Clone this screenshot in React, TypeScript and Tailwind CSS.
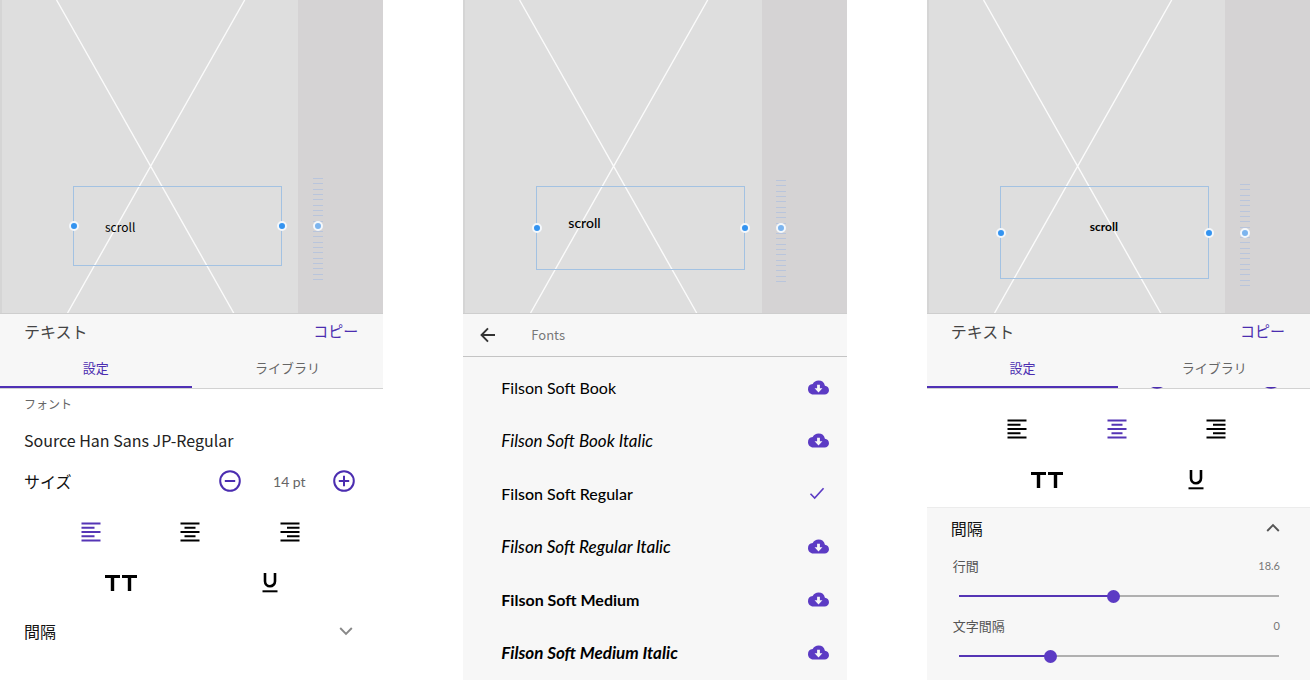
import { useState } from "react";

const JP = "font-['Noto_Sans_CJK_JP',sans-serif]";

type Align = "left" | "center" | "right";

const fonts = [
  { name: "Filson Soft Book", style: "text-[16px] font-normal" },
  { name: "Filson Soft Book Italic", style: "text-[17px] font-normal italic" },
  { name: "Filson Soft Regular", style: "text-[16px] font-medium", installed: true },
  { name: "Filson Soft Regular Italic", style: "text-[17px] font-medium italic" },
  { name: "Filson Soft Medium", style: "text-[16px] font-bold" },
  { name: "Filson Soft Medium Italic", style: "text-[17px] font-bold italic" },
];

/* Icons */

const alignLines: Record<Align, string> = {
  left: "M0 1h19M0 5.25h13M0 9.5h19M0 13.75h13M0 18h19",
  center: "M0 1h19M4 5.25h11M0 9.5h19M4 13.75h11M0 18h19",
  right: "M0 1h19M6.5 5.25h12.5M0 9.5h19M6.5 13.75h12.5M0 18h19",
};

function AlignIcon({ align }: { align: Align }) {
  return (
    <svg width="20" height="20" viewBox="-0.5 -0.5 20 20" stroke="currentColor" strokeWidth="1.9" fill="none">
      <path d={alignLines[align]} />
    </svg>
  );
}

function CircleIcon({ plus }: { plus?: boolean }) {
  return (
    <svg width="24" height="24" viewBox="0 0 24 24" stroke="currentColor" strokeWidth="2" fill="none">
      <circle cx="12" cy="12" r="9.8" />
      <path d={plus ? "M6.8 12h10.4M12 6.8v10.4" : "M6.8 12h10.4"} />
    </svg>
  );
}

function CapsIcon() {
  return (
    <svg width="34" height="20" viewBox="0 0 34 20" stroke="currentColor" fill="none">
      <path d="M1 3.5h15M18 3.5h15" strokeWidth="3" />
      <path d="M8.5 3v15M25.5 3v15" strokeWidth="3.4" />
    </svg>
  );
}

function UnderlineIcon() {
  return (
    <svg width="16" height="22" viewBox="0 0 16 22" stroke="currentColor" fill="none">
      <path d="M3 1v8.2a5 5 0 0 0 10 0V1" strokeWidth="2.6" />
      <path d="M0.5 19.3h15" strokeWidth="2" />
    </svg>
  );
}

function Chevron({ up }: { up?: boolean }) {
  return (
    <svg width="14" height="10" viewBox="0 0 14 10" stroke="currentColor" strokeWidth="1.9" fill="none">
      <path d={up ? "M1.2 8 7 2.2 12.8 8" : "M1.2 2 7 7.8 12.8 2"} />
    </svg>
  );
}

function CloudIcon() {
  return (
    <svg width="21" height="21" viewBox="0 0 24 24">
      <path
        fill="currentColor"
        d="M19.35 10.04A7.49 7.49 0 0 0 12 4C9.11 4 6.6 5.64 5.35 8.04A5.994 5.994 0 0 0 0 14c0 3.31 2.69 6 6 6h13c2.76 0 5-2.24 5-5 0-2.64-2.05-4.78-4.65-4.96Z"
      />
      <path fill="#f7f7f7" d="M10.4 8.8h3.2v4h2.9L12 17.6l-4.5-4.8h2.9Z" />
    </svg>
  );
}

function CheckIcon() {
  return (
    <svg width="21" height="21" viewBox="0 0 22 22" stroke="currentColor" strokeWidth="1.7" fill="none">
      <path d="M2.6 11.200 7 15.800 16.300 5.500" />
    </svg>
  );
}

function BackIcon() {
  return (
    <svg width="16" height="16" viewBox="0 0 16 16" stroke="currentColor" strokeWidth="1.9" fill="none">
      <path d="M15 8H2M8 1.300 1.500 8 8 14.700" />
    </svg>
  );
}

/* Artboard with the selected text box */

type CanvasProps = {
  boxHeight: string;
  handleY: string;
  text: string;
  ruler: string;
};

function Canvas({ boxHeight, handleY, text, ruler }: CanvasProps) {
  return (
    <div className="relative flex h-[314px] shrink-0 overflow-hidden border-b border-[#cecece] bg-[#dedede]">
      <div className="w-[2px] bg-[#d5d5d5]" />
      <div className="flex-1" />
      <div className="w-[85px] bg-[#d5d3d4]" />

      <svg className="absolute inset-0 h-full w-full" viewBox="0 0 383 314" preserveAspectRatio="none" fill="none">
        <path d="M56.5 0 233.5 314M244.500 0 67.500 314" stroke="#fbfbfb" strokeWidth="1.4" />
      </svg>

      <div className={`absolute top-[186px] left-[73px] w-[209px] border border-[#a3c2e2] ${boxHeight}`} />
      <span className={`absolute leading-5 text-black ${text}`}>scroll</span>

      <div className={`absolute left-[313px] flex h-[102px] w-[10px] flex-col justify-between ${ruler}`}>
        {Array.from({ length: 20 }, (_, i) => (
          <div key={i} className="h-px bg-[#b9c5dc]" />
        ))}
      </div>

      <Handle className={`left-[69px] bg-[#3393f0] ${handleY}`} />
      <Handle className={`left-[277px] bg-[#3393f0] ${handleY}`} />
      <Handle className={`left-[313px] bg-[#7cb4ee] ${handleY}`} />
    </div>
  );
}

function Handle({ className }: { className: string }) {
  return <div className={`absolute size-[10px] rounded-full border-2 border-[#f4f8fc] ${className}`} />;
}

/* Text settings */

type SliderProps = { id: string; label: string; value: number; min: number; max: number; step: number };

function Slider({ id, label, value, min, max, step }: SliderProps) {
  const [current, setCurrent] = useState(value);
  const pct = ((current - min) / (max - min)) * 100;

  return (
    <div>
      <div className="flex h-7 items-center justify-between pr-[30px] pl-[26px]">
        <label htmlFor={id} className="text-[13px] text-[#555]">
          {label}
        </label>
        <output htmlFor={id} className="font-['Lato',sans-serif] text-[11px] text-[#777]">
          {current}
        </output>
      </div>
      <div className="flex h-8 items-center pr-[31px] pl-8">
        <input
          id={id}
          type="range"
          min={min}
          max={max}
          step={step}
          value={current}
          onChange={(e) => setCurrent(Number(e.target.value))}
          style={{ backgroundImage: `linear-gradient(to right, #5535b5 ${pct}%, #b0b0b0 ${pct}%)` }}
          className="h-[2px] w-full appearance-none [&::-webkit-slider-thumb]:size-[13px] [&::-webkit-slider-thumb]:appearance-none [&::-webkit-slider-thumb]:rounded-full [&::-webkit-slider-thumb]:bg-[#5c3bc4]"
        />
      </div>
    </div>
  );
}

function TextPanel({ id, initialAlign, scrolled }: { id: string; initialAlign: Align; scrolled?: boolean }) {
  const [align, setAlign] = useState<Align>(initialAlign);
  const [size, setSize] = useState(14);
  const [open, setOpen] = useState(!!scrolled);

  return (
    <div className={`flex min-h-0 flex-1 flex-col ${JP}`}>
      <div className="bg-[#f7f7f7]">
        <div className="flex h-9 items-center justify-between pr-[25px] pb-0.5 pl-6">
          <h2 className="text-[16px] text-[#444]">テキスト</h2>
          <button className="text-[15px] text-[#4b2db0]">コピー</button>
        </div>
        <div role="tablist" className="flex h-[39px] border-b border-[#d2d2d2] text-[13px]">
          <button role="tab" aria-selected="true" className="flex-1 border-b-2 border-[#4f31b5] text-[#4b2db0]">
            設定
          </button>
          <button role="tab" aria-selected="false" className="flex-1 border-b-2 border-transparent text-[#666]">
            ライブラリ
          </button>
        </div>
      </div>

      <div className="-mt-[2px] min-h-0 flex-1 overflow-hidden">
        <div className={scrolled ? "-mt-[29px]" : ""}>
          {!scrolled && (
            <>
              <p className="flex h-[34px] items-center px-6 text-[12px] text-[#666]">フォント</p>
              <p className="flex h-10 items-center px-6 pb-0.5 text-[16px] text-[#222]">Source Han Sans JP-Regular</p>
            </>
          )}

          <div className="flex h-[42px] items-center pr-[27px] pb-0.5 pl-6">
            <span className="flex-1 text-[16px] text-[#111]">サイズ</span>
            <button aria-label="-" onClick={() => setSize(size - 1)} className="text-[#4b2db0]">
              <CircleIcon />
            </button>
            <span className="w-[90px] pl-1 text-center font-['Lato',sans-serif] text-[14px] text-[#666]">{size} pt</span>
            <button aria-label="+" onClick={() => setSize(size + 1)} className="text-[#4b2db0]">
              <CircleIcon plus />
            </button>
          </div>

          <div className="grid h-[58px] grid-cols-3 items-center pr-[44px] pl-[41px]">
            {(["left", "center", "right"] as Align[]).map((a) => (
              <button
                key={a}
                aria-label={a}
                onClick={() => setAlign(a)}
                className={`flex justify-center ${a === align ? "text-[#5535b5]" : "text-black"}`}
              >
                <AlignIcon align={a} />
              </button>
            ))}
          </div>

          <div className="grid h-[44px] grid-cols-2 items-center pr-[39px] pl-[46px] text-black">
            <button aria-label="TT" className="flex justify-center">
              <CapsIcon />
            </button>
            <button aria-label="U" className="flex justify-center">
              <UnderlineIcon />
            </button>
          </div>

          <div className={`mt-[5px] border-t pb-4 ${open ? "border-[#ececec] bg-[#f7f7f7]" : "border-transparent"}`}>
            <button
              aria-expanded={open}
              onClick={() => setOpen(!open)}
              className="flex h-[43px] w-full items-center justify-between pr-[30px] pb-[3px] pl-6 text-[16px] text-[#111]"
            >
              間隔
              <span className={open ? "text-[#555]" : "text-[#888]"}>
                <Chevron up={open} />
              </span>
            </button>
            {open && (
              <div className="pt-px">
                <Slider id={`${id}-line`} label="行間" value={18.6} min={0} max={38.6} step={0.1} />
                <Slider id={`${id}-letter`} label="文字間隔" value={0} min={-100} max={261} step={1} />
              </div>
            )}
          </div>
        </div>
      </div>
    </div>
  );
}

/* Font list */

function FontsPanel() {
  return (
    <div className="flex-1 bg-[#f7f7f7]">
      <div className={`flex h-[43px] items-center border-b border-[#c4c4c4] pl-[17px] ${JP}`}>
        <button aria-label="←" className="text-[#333]">
          <BackIcon />
        </button>
        <h2 className="pl-[35px] text-[13px] text-[#777]">Fonts</h2>
      </div>
      <ul className="pt-1 font-['Lato',sans-serif]">
        {fonts.map((f) => (
          <li key={f.name}>
            <button className={`flex h-[53px] w-full items-center justify-between pr-[18px] pl-[38px] text-black ${f.style}`}>
              {f.name}
              <span className="text-[#5c3bc4]">{f.installed ? <CheckIcon /> : <CloudIcon />}</span>
            </button>
          </li>
        ))}
      </ul>
    </div>
  );
}

export default function App() {
  return (
    <main className="grid h-screen grid-cols-3 gap-20 overflow-hidden bg-white">
      <section className="flex min-h-0 flex-col">
        <Canvas
          boxHeight="h-[80px]"
          handleY="top-[221px]"
          ruler="top-[178px]"
          text="top-[217px] left-[105px] text-[12px] font-['Noto_Sans_CJK_JP',sans-serif]"
        />
        <TextPanel id="left" initialAlign="left" />
      </section>
      <section className="flex min-h-0 flex-col">
        <Canvas
          boxHeight="h-[84px]"
          handleY="top-[223px]"
          ruler="top-[180px]"
          text="top-[213px] left-[105px] text-[14px] font-medium font-['Lato',sans-serif]"
        />
        <FontsPanel />
      </section>
      <section className="flex min-h-0 flex-col">
        <Canvas
          boxHeight="h-[93px]"
          handleY="top-[228px]"
          ruler="top-[184px]"
          text="top-[217px] left-[163px] text-[12px] font-bold font-['Lato',sans-serif]"
        />
        <TextPanel id="right" initialAlign="center" scrolled />
      </section>
    </main>
  );
}
